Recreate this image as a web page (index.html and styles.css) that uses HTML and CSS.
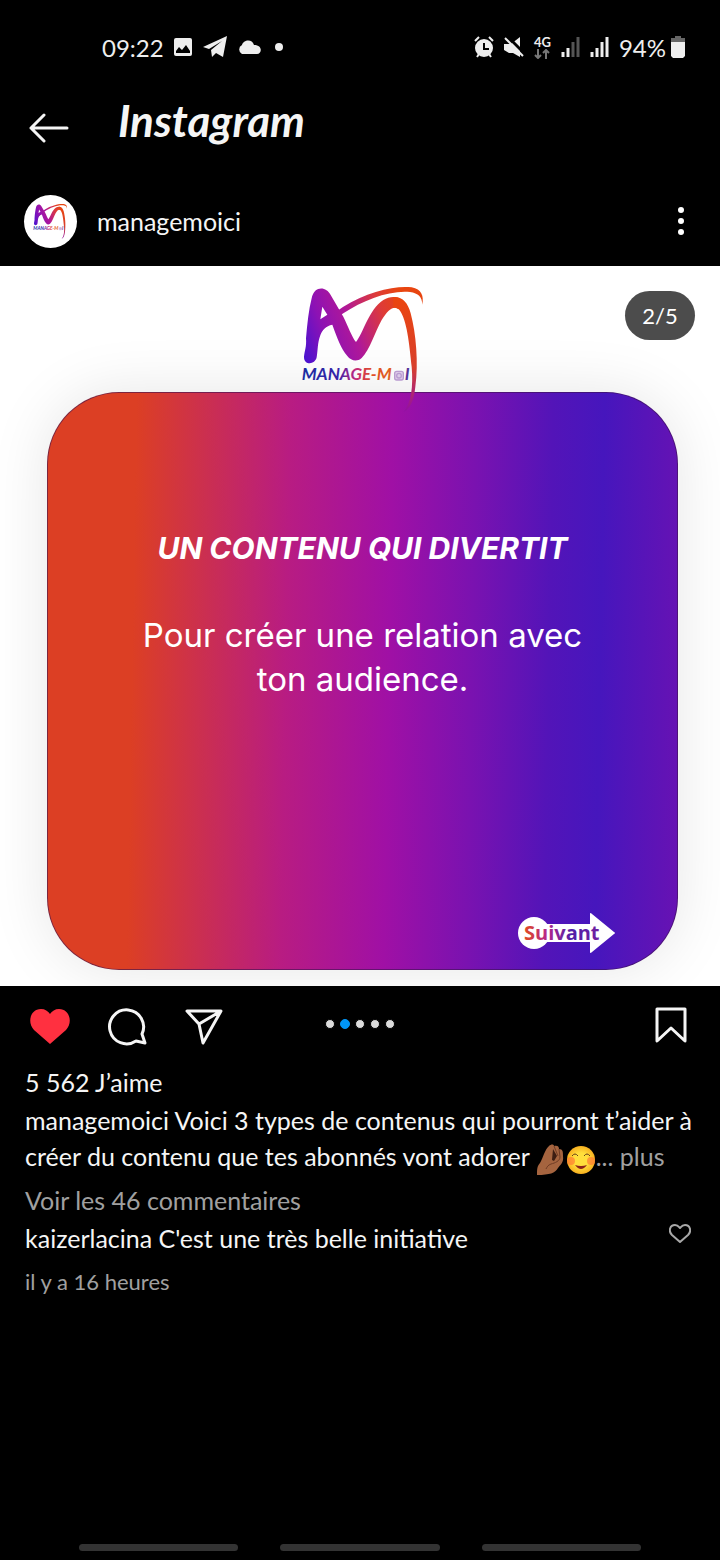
FILE: index.html
```html
<!DOCTYPE html>
<html lang="fr">
<head>
  <meta charset="UTF-8">
  <meta name="viewport" content="width=device-width, initial-scale=1.0">
  <title>Instagram</title>
  <link rel="stylesheet" href="styles.css">
</head>
<body>
  <div class="status-bar">
    <div class="status-left">
      <span class="clock">09:22</span>
      <svg width="20" height="20" viewBox="0 0 20 20"><rect x="1" y="1" width="18" height="18" rx="2" fill="#eee"/><path d="M3 16v-2l3-4 3 3 4-5 4 6v2z" fill="#000"/></svg>
      <svg width="24" height="22" viewBox="0 0 24 22"><path d="M0 11L24 0l-4 21-7-4-4 4-1-7L19 5 6 13z" fill="#eee"/></svg>
      <svg width="24" height="16" viewBox="0 0 24 16"><path d="M5 15a5 5 0 0 1 0-9C6 1 15-1 17 6c9 0 8 9 3 9z" fill="#eee"/></svg>
      <svg width="8" height="8" viewBox="0 0 8 8"><circle cx="4" cy="4" r="4" fill="#eee"/></svg>
    </div>
    <div class="status-right">
      <svg width="20" height="22" viewBox="0 0 20 22"><circle cx="10" cy="12" r="9" fill="#eee"/><path d="M1 5l4-4M19 5l-4-4M3 21l2-3M17 21l-2-3" stroke="#eee" stroke-width="2"/><path d="M10 7v6h5" stroke="#000" stroke-width="2" fill="none"/></svg>
      <svg width="20" height="22" viewBox="0 0 20 22"><path d="M0 8h7l9-7v20l-7-4H5l-5-3z" fill="#eee"/><path d="M3 0l17 17" stroke="#000" stroke-width="3"/><path d="M1 2l18 18" stroke="#eee" stroke-width="2"/></svg>
      <span class="network">4G
        <svg width="16" height="10" viewBox="0 0 16 10"><path d="M4 0v9M1 6l3 3 3-3M12 10V1M9 4l3-3 3 3" stroke="#777" stroke-width="2" fill="none"/></svg>
      </span>
      <svg width="19" height="20" viewBox="0 0 19 20"><path d="M2 15v5M7 11v9" stroke="#eee" stroke-width="3"/><path d="M12 5v15M17 0v20" stroke="#555" stroke-width="3"/></svg>
      <svg width="19" height="20" viewBox="0 0 19 20"><path d="M2 15v5M7 11v9M12 5v15M17 0v20" stroke="#eee" stroke-width="3"/></svg>
      <span class="battery">94%
        <svg width="14" height="22" viewBox="0 0 14 22"><path d="M4 0h6v2h4v5H0V2h4z" fill="#666"/><path d="M0 6h14v14l-2 2H2l-2-2z" fill="#eee"/></svg>
      </span>
    </div>
  </div>

  <header class="app-bar">
    <button class="icon-btn back" aria-label="Retour">
      <svg width="40" height="32" viewBox="0 0 40 32"><path d="M38 16H2M15 3L2 16l13 13" fill="none" stroke="#f5f5f5" stroke-width="3" stroke-linecap="round" stroke-linejoin="round"/></svg>
    </button>
    <h1 class="brand">Instagram</h1>
  </header>

  <article class="post">
    <div class="user-bar">
      <a class="user" href="#">
        <span class="avatar">
          <svg width="39" height="39" viewBox="50 30 400 420"><use href="#manage-moi"/></svg>
        </span>
        managemoici
      </a>
      <button class="icon-btn" aria-label="Options">
        <svg width="6" height="28" viewBox="0 0 6 28"><g fill="#fff"><circle cx="3" cy="3" r="3"/><circle cx="3" cy="14" r="3"/><circle cx="3" cy="25" r="3"/></g></svg>
      </button>
    </div>

    <div class="media">
      <span class="counter">2/5</span>
      <svg class="logo" width="165" height="150" viewBox="0 0 495 450">
        <defs>
          <linearGradient id="brandStroke" gradientUnits="userSpaceOnUse" x1="75" y1="270" x2="390" y2="150">
            <stop offset="0" stop-color="#4a12d0"/>
            <stop offset=".25" stop-color="#8d12b4"/>
            <stop offset=".5" stop-color="#b01898"/>
            <stop offset=".8" stop-color="#de3b38"/>
            <stop offset="1" stop-color="#e84510"/>
          </linearGradient>
          <linearGradient id="brandTail" gradientUnits="userSpaceOnUse" x1="0" y1="90" x2="0" y2="425">
            <stop offset="0" stop-color="#ea4510"/>
            <stop offset=".6" stop-color="#d8402c"/>
            <stop offset="1" stop-color="#9010a4"/>
          </linearGradient>
          <linearGradient id="brandText" gradientUnits="userSpaceOnUse" x1="65" y1="0" x2="385" y2="0">
            <stop offset="0" stop-color="#1a2ca0"/>
            <stop offset=".35" stop-color="#3a22a8"/>
            <stop offset=".5" stop-color="#c02880"/>
            <stop offset=".65" stop-color="#e04a28"/>
            <stop offset=".85" stop-color="#e06020"/>
            <stop offset="1" stop-color="#4030a0"/>
          </linearGradient>
          <g id="manage-moi">
            <path fill="url(#brandStroke)" fill-rule="evenodd" d="M72 260C74 242 80 230 78 205C82 160 86 120 95 85C102 48 138 48 152 75L190 140C205 170 215 200 228 216C250 190 265 120 310 90C326 80 342 78 356 84L356 118C342 106 325 118 305 150C285 185 270 240 245 264C230 277 213 272 202 258C182 234 172 205 157 164C138 168 126 180 121 196C112 220 114 240 110 262C105 286 71 286 72 260ZM127 110L121 148L142 134Z"/>
            <path fill="url(#brandTail)" d="M340 81C366 78 384 98 392 130C408 190 416 280 406 350C402 390 390 418 370 426C394 400 400 350 395 290C388 220 380 150 360 122C353 113 347 112 340 114Z"/>
            <path fill="url(#brandStroke)" d="M112 198C125 165 150 135 190 110C260 65 350 45 395 52C425 58 432 78 427 104C426 80 415 70 390 66C330 60 250 90 190 130C160 150 138 168 112 198Z"/>
            <text class="logo-text" x="65" y="331" fill="url(#brandText)">MANAGE-M</text>
            <g fill="none" stroke="#b99bd0" stroke-width="4"><rect x="344" y="304" width="26" height="26" rx="6" fill="#ddcbe8"/><circle cx="357" cy="317" r="7"/></g>
            <text class="logo-text" x="374" y="331" fill="#553398">I</text>
          </g>
        </defs>
        <use href="#manage-moi"/>
      </svg>
      <div class="slide">
        <h2 class="slide-title">UN CONTENU QUI DIVERTIT</h2>
        <p class="slide-text">Pour créer une relation avec<br>ton audience.</p>
        <svg class="next" width="100" height="42" viewBox="0 0 100 42">
          <defs>
            <linearGradient id="nextText" gradientUnits="userSpaceOnUse" x1="7" y1="0" x2="81" y2="0">
              <stop offset="0" stop-color="#e04a20"/>
              <stop offset=".3" stop-color="#b82888"/>
              <stop offset=".65" stop-color="#5020a8"/>
              <stop offset="1" stop-color="#7020a0"/>
            </linearGradient>
          </defs>
          <path d="M17 12H73V2Q73 0 75 2L97 20Q99 21 97 22L75 40Q73 42 73 40V30H17Z" fill="#fff"/>
          <circle cx="17" cy="21" r="16" fill="#fff"/>
          <text class="next-text" x="7" y="28" fill="url(#nextText)">Suivant</text>
        </svg>
      </div>
    </div>

    <div class="actions">
      <div class="action-group">
        <button class="icon-btn" aria-label="J’aime">
          <svg width="44" height="44" viewBox="0 0 44 44"><path d="M22 42L6 28C-1 21 2 7 13 7C17 7 20 9 22 12C24 9 27 7 31 7C42 7 45 21 38 28Z" fill="#ff3040"/></svg>
        </button>
        <button class="icon-btn" aria-label="Commenter">
          <svg width="44" height="44" viewBox="0 0 44 44"><path d="M37 32A17 17 0 1 0 31 39L40 41Z" fill="none" stroke="#f5f5f5" stroke-width="3" stroke-linejoin="round"/></svg>
        </button>
        <button class="icon-btn" aria-label="Partager">
          <svg width="44" height="44" viewBox="0 0 44 44"><path d="M5 9H39L21 41L17 22ZM17 22L39 9" fill="none" stroke="#f5f5f5" stroke-width="3" stroke-linejoin="round"/></svg>
        </button>
      </div>
      <div class="dots">
        <span class="dot"></span>
        <span class="dot active"></span>
        <span class="dot"></span>
        <span class="dot"></span>
        <span class="dot"></span>
      </div>
      <button class="icon-btn save" aria-label="Enregistrer">
        <svg width="44" height="44" viewBox="0 0 44 44"><path d="M9 7H37V39L23 26L9 39Z" fill="none" stroke="#f5f5f5" stroke-width="3" stroke-linejoin="round"/></svg>
      </button>
    </div>

    <div class="details">
      <p class="likes">5 562 J’aime</p>
      <p class="caption">managemoici Voici 3 types de contenus qui pourront t’aider à créer du contenu que tes abonnés vont adorer
        <span class="emojis">
          <svg width="28" height="32" viewBox="0 0 28 32"><path d="M1 31C1 26 1 22 4 19C7 14 9 5 13 2C15 0 18 0 18 2C22 1 23 3 23 5C27 5 27 8 27 12C28 19 24 21 22 24C19 29 14 31 1 31Z" fill="#a5643f"/><path d="M17 5L21 12L18 17L16 16Z" fill="#3d1d12"/><path d="M18 2L22 12M23 5L24 13C24 17 19 19 15 20C12 21 11 23 10 25" fill="none" stroke="#703c25" stroke-width="1"/></svg>
          <svg width="30" height="30" viewBox="0 0 30 30"><defs><radialGradient id="smile"><stop offset=".5" stop-color="#ffdf3c"/><stop offset="1" stop-color="#f7b020"/></radialGradient></defs><circle cx="15" cy="15" r="14" fill="url(#smile)"/><circle cx="5" cy="16" r="4" fill="#ff7d35" opacity=".7"/><circle cx="25" cy="16" r="4" fill="#ff7d35" opacity=".7"/><path d="M6 11Q9 7 12 11M18 11Q21 7 24 11" fill="none" stroke="#67401a" stroke-width="1"/><path d="M9 20Q15 22 21 20Q15 28 9 20Z" fill="#8c2418"/></svg>
        </span><a class="more" href="#">... plus</a>
      </p>
      <a class="comments-link" href="#">Voir les 46 commentaires</a>
      <div class="comment">
        <p>kaizerlacina C'est une très belle initiative</p>
        <button class="icon-btn" aria-label="Aimer le commentaire">
          <svg width="22" height="20" viewBox="0 0 22 20"><path d="M11 18L3 11C-1 7 1 1 6 1C9 1 10 3 11 4C12 3 13 1 16 1C21 1 23 7 19 11Z" fill="none" stroke="#a8a8a8" stroke-width="2" stroke-linejoin="round"/></svg>
        </button>
      </div>
      <p class="time">il y a 16 heures</p>
    </div>
  </article>

  <div class="nav-hints">
    <span></span>
    <span></span>
    <span></span>
  </div>
</body>
</html>
```
FILE: styles.css
```css
* {
  box-sizing: border-box;
}
body {
  margin: 0;
  min-height: 100vh;
  display: flex;
  flex-direction: column;
  background: #000;
  color: #f5f5f5;
  font-family: Lato, sans-serif;
  font-size: 25px;
}
h1, h2, p {
  margin: 0;
}
a {
  color: inherit;
  text-decoration: none;
}
svg {
  display: block;
  flex: none;
}
.icon-btn {
  display: flex;
  padding: 0;
  border: none;
  background: none;
  cursor: pointer;
}

/* status bar */
.status-bar {
  display: flex;
  justify-content: space-between;
  align-items: center;
  height: 94px;
  padding: 0 35px 0 102px;
  color: #eee;
  font-size: 24px;
}
.status-left, .status-right {
  display: flex;
  align-items: center;
  gap: 10px;
}
.clock {
  width: 61px;
}
.status-left svg:last-child {
  margin-left: 4px;
}
.network {
  display: flex;
  flex-direction: column;
  align-items: center;
  gap: 1px;
  font-size: 13px;
  font-weight: bold;
  line-height: 12px;
}
.battery {
  display: flex;
  align-items: center;
  gap: 5px;
}

/* header */
.app-bar {
  display: flex;
  align-items: center;
  gap: 49px;
  height: 82px;
  padding: 0 29px 14px;
}
.brand {
  padding-bottom: 16px;
  font-size: 44px;
  font-style: italic;
  font-weight: bold;
  line-height: 50px;
}
.user-bar {
  display: flex;
  justify-content: space-between;
  align-items: center;
  height: 90px;
  padding: 0 36px 0 24px;
}
.user {
  display: flex;
  align-items: center;
  gap: 20px;
}
.avatar {
  display: flex;
  align-items: center;
  justify-content: center;
  width: 53px;
  height: 53px;
  border-radius: 50%;
  background: #fff;
}

/* carousel */
.media {
  position: relative;
  display: flex;
  flex-direction: column;
  align-items: center;
  aspect-ratio: 1;
  padding: 4px 42px 16px 47px;
  overflow: hidden;
  background: #fff;
}
.counter {
  position: absolute;
  top: 25px;
  right: 25px;
  width: 70px;
  border-radius: 25px;
  background: #4c4c4c;
  color: #fff;
  font-size: 22px;
  line-height: 49px;
  text-align: center;
}
.logo {
  position: relative;
  z-index: 1;
  margin-bottom: -28px;
}
.logo-text {
  font-family: Lato, sans-serif;
  font-size: 51px;
  font-style: italic;
  font-weight: bold;
}
.slide {
  display: flex;
  flex: 1;
  flex-direction: column;
  align-self: stretch;
  padding: 133px 60px 15px;
  border: 1px solid rgba(60, 20, 80, 0.6);
  border-radius: 72px;
  background: linear-gradient(91deg, #dc3f24 0%, #dc3f24 14%, #cb2f50 25%, #b81c82 38%, #a010a5 54%, #7a12b0 67%, #5314b8 79%, #4616bd 87%, #6812b3 100%) border-box;
  box-shadow: 0 0 60px rgba(0, 0, 0, 0.1);
  color: #fff;
  text-align: center;
}
.slide-title {
  margin-bottom: 43px;
  font-family: Inter, sans-serif;
  font-size: 30px;
  font-style: italic;
  font-weight: bold;
  line-height: 44px;
}
.slide-text {
  font-family: Inter, sans-serif;
  font-size: 33px;
  line-height: 44px;
}
.next {
  align-self: flex-end;
  margin-top: auto;
}
.next-text {
  font-family: "Open Sans", sans-serif;
  font-size: 20px;
  font-weight: bold;
}

/* actions */
.actions {
  display: grid;
  grid-template-columns: 1fr auto 1fr;
  align-items: center;
  height: 76px;
  padding: 0 28px;
}
.action-group {
  display: flex;
  gap: 33px;
}
.dots {
  display: flex;
  gap: 5px;
}
.dot {
  width: 10px;
  height: 10px;
  border: 1px solid #000;
  border-radius: 50%;
  background: #dbdbdb;
}
.dot.active {
  border-color: #0095f6;
  background: #0095f6;
}
.save {
  justify-self: end;
}

/* text under the post */
.details {
  padding: 0 25px;
  line-height: 36px;
}
.likes {
  line-height: 40px;
}
.emojis {
  display: inline-flex;
  align-items: center;
  gap: 2px;
  height: 32px;
  vertical-align: middle;
}
.more, .comments-link, .time {
  color: #a0a0a0;
}
.comments-link {
  display: block;
  margin-top: 4px;
  line-height: 40px;
}
.comment {
  display: flex;
  justify-content: space-between;
  align-items: flex-start;
  padding-right: 4px;
}
.comment .icon-btn {
  padding-top: 4px;
}
.time {
  margin-top: 8px;
  font-size: 22px;
}

.nav-hints {
  display: flex;
  justify-content: space-between;
  gap: 42px;
  margin-top: auto;
  padding: 0 79px 9px;
}
.nav-hints span {
  flex: 1;
  height: 7px;
  border-radius: 4px;
  background: #333;
}
```
